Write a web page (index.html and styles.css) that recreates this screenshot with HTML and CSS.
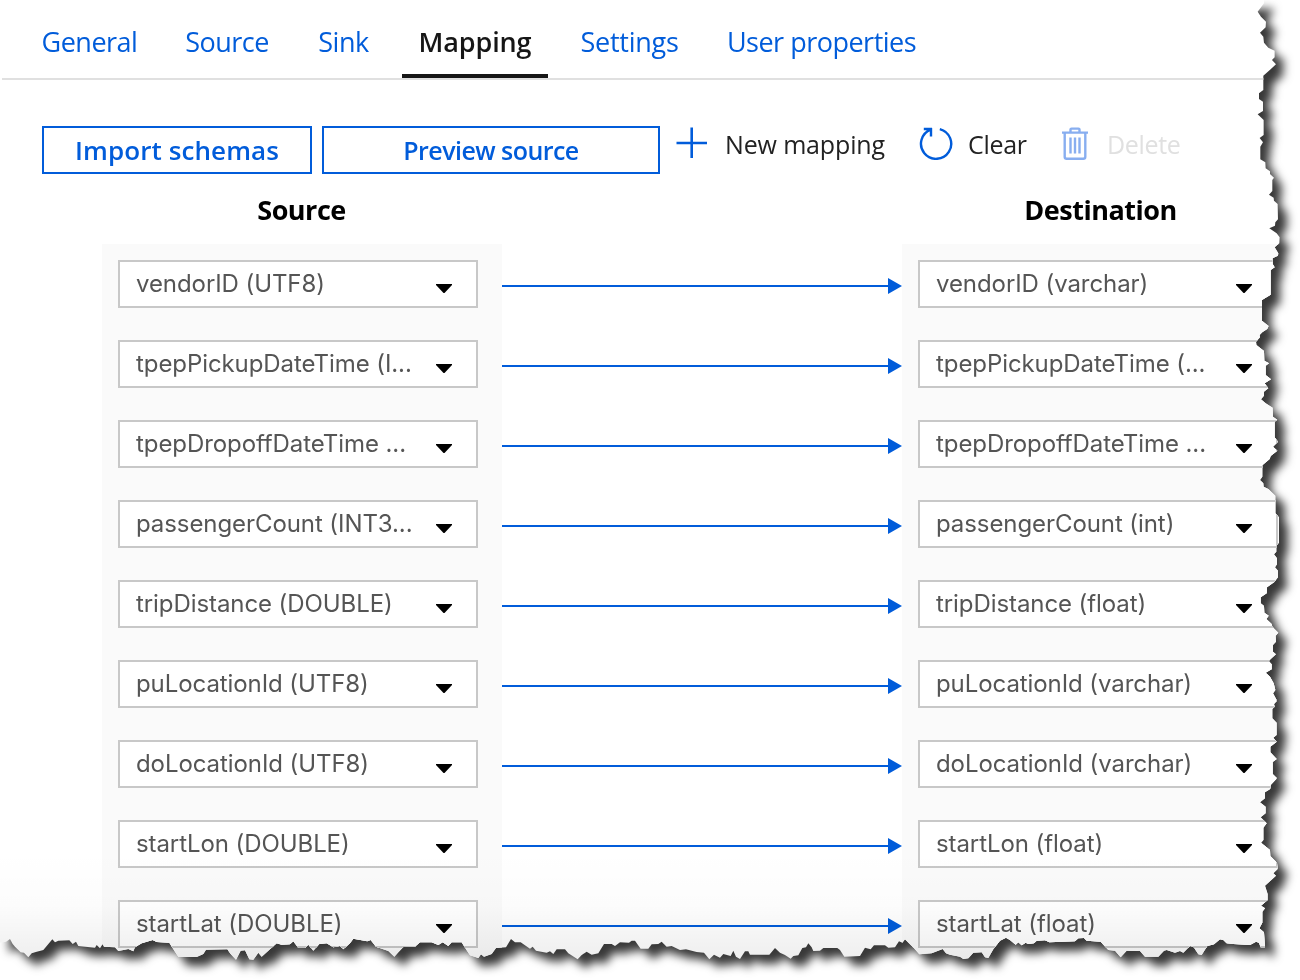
FILE: index.html
```html
<!DOCTYPE html>
<html lang="en">
<head>
<meta charset="utf-8">
<title>Mapping</title>
<link rel="stylesheet" href="styles.css">
</head>
<body>
<svg class="defs" width="0" height="0" aria-hidden="true">
  <defs>
    <clipPath id="torn-edge" clipPathUnits="userSpaceOnUse">
      <path transform="scale(.33333)" d="M0 0 H3792 V10
      L3773 35 3783 50 3798 65 3797 82 3780 98 3790 110 3792 128 3805 143 3824 152 3824 172 3816 180 3828 193 3812 208 3790 227 3790 270 3777 280 3777 297 3789 305 3789 333 3773 343 3791 360 3791 405 3779 414 3789 427 3781 440 3781 478 3796 487 3797 505 3810 514 3810 522 3822 533 3817 540 3817 573 3807 584 3821 593 3822 602 3833 612 3834 658 3826 667 3825 677 3808 685 3830 700 3839 712 3838 730 3824 742 3835 760 3834 767 3818 775 3818 792 3824 802 3812 810 3812 884 3786 900 3786 962 3806 978
      3802 987 3787 997 3779 1005 3780 1012 3768 1025 3769 1035 3792 1053 3793 1082 3807 1090 3797 1097 3797 1125 3813 1138 3794 1150 3805 1165 3792 1175 3792 1187 3783 1198 3797 1210 3818 1223 3819 1250 3832 1259 3824 1265 3824 1312 3834 1325 3819 1340 3832 1352 3812 1368 3809 1377 3787 1396 3787 1430 3780 1440 3790 1450 3791 1460 3805 1467 3826 1487 3826 1540 3837 1552 3837 1562 3837 1628 3829 1637 3829 1655 3822 1663 3831 1675 3831 1693 3825 1702 3834 1712 3834 1732 3823 1746 3801 1762 3800 1780 3782 1792 3782 1810 3792 1818 3793 1838 3806 1847 3799 1857 3815 1872 3817 1880 3835 1898 3827 1907 3828 1925
      3819 1935 3819 1955 3828 1963 3806 1983 3815 1993 3815 2008 3797 2018 3810 2030 3821 2050 3826 2070 3819 2080 3831 2102 3822 2112 3824 2120 3817 2127 3817 2155 3830 2168 3830 2205 3820 2213 3830 2225 3811 2240 3811 2257 3830 2277 3818 2286 3818 2322 3831 2335 3812 2355 3811 2367 3795 2377 3795 2395 3780 2407 3797 2420 3797 2440 3782 2452 3800 2470 3790 2483 3790 2520 3783 2528 3810 2550 3811 2568 3831 2588 3833 2607 3820 2620 3828 2627 3795 2657 3803 2682 3803 2700 3783 2717 3795 2725 3787 2735 3787 2768 3778 2785 3792 2797 3795 2842
      3782 2842 3777 2828 3768 2825 3750 2835 3700 2832 3680 2830 3670 2820 3660 2818 3642 2833 3622 2838 3605 2865 3595 2863 3580 2840 3570 2838 3550 2858 3540 2853 3525 2858 3500 2850 3492 2852 3475 2870 3435 2870 3420 2853 3380 2852 3362 2872 3345 2852 3325 2850 3302 2825 3260 2822 3252 2814 3235 2815 3225 2824 3148 2827 3135 2821 3110 2822 3102 2830 3085 2832 3077 2828 3065 2836 3055 2827 3047 2834 3030 2820 3018 2813 3000 2822 2980 2848 2965 2874 2955 2872 2945 2857 2920 2858 2905 2875 2890 2877 2880 2870 2850 2864 2838 2860 2828 2847 2795 2860 2758 2863 2745 2848 2715 2818 2707 2828 2697 2824 2685 2842 2665 2843 2655 2836 2622 2836 2612 2848
      2595 2843 2580 2868 2533 2870 2520 2850 2512 2844 2470 2844 2460 2852 2440 2853 2435 2842 2425 2830 2418 2842 2407 2844 2395 2866 2380 2868 2372 2876 2355 2865 2340 2858 2325 2844 2308 2864 2250 2864 2245 2854 2235 2854 2220 2877 2208 2870 2200 2852 2192 2868 2170 2862 2160 2873 2142 2864 2128 2878 2112 2858 2090 2856 2058 2848 2040 2850 2015 2838 2000 2840 1985 2825 1975 2832 1955 2833 1945 2846 1922 2846 1905 2822 1895 2822 1887 2828 1860 2827 1845 2838 1835 2832 1812 2832 1795 2860 1775 2864 1760 2855 1745 2865 1733 2878 1705 2860 1695 2848 1670 2848 1660 2862 1650 2854 1640 2858 1608 2852 1598 2840 1590 2846 1562 2827 1545 2827 1533 2817 1518 2842 1488 2844 1475 2862 1452 2870 1443 2863 1435 2874 1410 2866 1398 2848 1385 2827 1355 2827 1345 2838 1328 2827 1315 2835
      1295 2827 1260 2827 1245 2840 1210 2841 1195 2857 1183 2870 1165 2853 1128 2840 1112 2820 1102 2824 1060 2816 1050 2830 1030 2848 1020 2838 1000 2842 980 2830 958 2832 940 2852 925 2834 915 2844 895 2844 880 2824 870 2833 845 2834 830 2830 805 2852 785 2870 775 2858 760 2879 748 2878 735 2851 722 2852 708 2879 690 2860 682 2848 618 2849 610 2862 590 2871 535 2870 525 2855 508 2828 470 2826 458 2820 425 2830 405 2842 400 2854 385 2847 355 2853 345 2842 312 2840 308 2832 300 2845 290 2835 285 2843 235 2838 228 2825 218 2832 208 2821 175 2822 165 2827 157 2818 130 2850 110 2855 95 2860 85 2872 72 2858 62 2857 45 2840 38 2832 30 2817 18 2825 0 2828 Z"/>
    </clipPath>
  </defs>
</svg>
<div class="shadow">
  <main class="sheet">
    <nav class="tabs">
      <a class="tab t-general"><span>General</span></a>
      <a class="tab t-source"><span>Source</span></a>
      <a class="tab t-sink"><span>Sink</span></a>
      <a class="tab t-mapping active"><span>Mapping</span></a>
      <a class="tab t-settings"><span>Settings</span></a>
      <a class="tab t-user"><span>User properties</span></a>
    </nav>
    <div class="toolbar">
      <button class="btn import"><span>Import schemas</span></button>
      <button class="btn preview"><span>Preview source</span></button>
      <div class="cmd new">
        <svg width="32" height="34" viewBox="0 0 32 34" fill="none" stroke="#015cda" stroke-width="2.6"><path d="M15.700 1.500v30.500M.5 17h30.500"/></svg>
        <span>New mapping</span>
      </div>
      <div class="cmd clear">
        <svg width="34" height="34" viewBox="0 0 34 34" fill="none" stroke="#015cda" stroke-width="2.4"><path d="M20.800 3.100A15.100 15.100 0 1 1 11.800 3.600M4.800 3H13M12 2v8.500"/></svg>
        <span>Clear</span>
      </div>
      <div class="cmd delete">
        <svg width="28" height="34" viewBox="0 0 28 34" fill="none" stroke="#88aef0" stroke-width="2.4"><path d="M1 6.600h26M9.500 6.400V3.600q0-1 1-1h7q1 0 1 1V6.400M3.700 6.400v24.300q0 2 2 2h16.600q2 0 2-2V6.400M9.500 11.400v16M14 11.400v16M18.500 11.400v16"/></svg>
        <span>Delete</span>
      </div>
    </div>
    <div class="heads"><h2 class="h-source">Source</h2><h2 class="h-dest">Destination</h2></div>
    <div class="mapping">
      <section class="col">
        <div class="select"><span>vendorID (UTF8)</span><i></i></div>
        <div class="select"><span>tpepPickupDateTime (I...</span><i></i></div>
        <div class="select"><span>tpepDropoffDateTime ...</span><i></i></div>
        <div class="select"><span>passengerCount (INT3...</span><i></i></div>
        <div class="select"><span>tripDistance (DOUBLE)</span><i></i></div>
        <div class="select"><span>puLocationId (UTF8)</span><i></i></div>
        <div class="select"><span>doLocationId (UTF8)</span><i></i></div>
        <div class="select"><span>startLon (DOUBLE)</span><i></i></div>
        <div class="select"><span>startLat (DOUBLE)</span><i></i></div>
      </section>
      <div class="links">
        <div class="link"></div><div class="link"></div><div class="link"></div>
        <div class="link"></div><div class="link"></div><div class="link"></div>
        <div class="link"></div><div class="link"></div><div class="link"></div>
      </div>
      <section class="col">
        <div class="select"><span>vendorID (varchar)</span><i></i></div>
        <div class="select"><span>tpepPickupDateTime (...</span><i></i></div>
        <div class="select"><span>tpepDropoffDateTime ...</span><i></i></div>
        <div class="select"><span>passengerCount (int)</span><i></i></div>
        <div class="select"><span>tripDistance (float)</span><i></i></div>
        <div class="select"><span>puLocationId (varchar)</span><i></i></div>
        <div class="select"><span>doLocationId (varchar)</span><i></i></div>
        <div class="select"><span>startLon (float)</span><i></i></div>
        <div class="select"><span>startLat (float)</span><i></i></div>
      </section>
    </div>
    <div class="shade"></div>
  </main>
</div>
</body>
</html>
```
FILE: styles.css
```css
* { box-sizing: border-box; }
body { margin: 0; background: #fff; width: 1300px; height: 980px; overflow: hidden; font-family: "Open Sans", "Noto Sans", sans-serif; }
.defs { position: absolute; }
.shadow { width: 1300px; height: 980px; filter: drop-shadow(9px 9px 5px rgba(0, 0, 0, .78)); }
.sheet { position: relative; width: 1300px; height: 980px; overflow: hidden; background: #fff; clip-path: url(#torn-edge); }

.tabs { display: flex; gap: 16px; height: 80px; margin-left: 2px; padding-left: 24px; border-bottom: 2px solid #e0e0e0; }
.tab { display: flex; justify-content: center; height: 78px; padding-top: 23px; font-size: 27px; line-height: 37px; letter-spacing: -.5px; white-space: nowrap; color: #015cda; }
.t-general { width: 127px; }
.t-source { width: 116px; }
.t-sink { width: 85px; }
.t-mapping { width: 146px; }
.t-settings { width: 131px; letter-spacing: -.25px; }
.t-user { width: 221px; }
.tab.active { color: #161616; font-weight: 600; letter-spacing: -.15px; border-bottom: 4px solid #161616; }

.toolbar { display: flex; align-items: flex-start; height: 48px; margin: 46px 0 0 42px; }
.btn { height: 48px; padding: 0; border: 2px solid #015cda; background: #fff; color: #015cda; font: 600 26px/44px "Open Sans", sans-serif; white-space: nowrap; }
.import { width: 270px; margin-right: 10px; letter-spacing: .1px; }
.preview { width: 338px; font-size: 25px; letter-spacing: -.55px; }
.cmd { display: flex; height: 36px; font-size: 25px; line-height: 36px; letter-spacing: -.15px; white-space: nowrap; color: #222; }
.new { margin-left: 16px; width: 243px; gap: 17px; }
.clear { width: 142px; gap: 15px; letter-spacing: -.3px; }
.delete { gap: 18px; color: #e0e0e0; letter-spacing: -.35px; }

.heads { display: flex; height: 70px; padding: 18px 0 0 102px; }
h2 { margin: 0; width: 400px; font-size: 27px; font-weight: 700; line-height: 36px; letter-spacing: -.5px; text-align: center; color: #000; }
.h-dest { margin-left: 400px; }

.mapping { display: flex; padding-left: 102px; }
.col { display: flex; flex-direction: column; flex: none; gap: 32px; width: 400px; height: 736px; padding: 16px 24px 0 16px; background: #fafafa; }
.select { display: flex; flex: none; justify-content: space-between; height: 48px; padding: 0 24px 0 16px; border: 2px solid #c8c8c8; background: #fff; font: 24px/44px Inter, sans-serif; color: #555; white-space: nowrap; letter-spacing: -.08px; }
.select i { width: 16px; height: 9px; margin-top: 22px; background: #000; clip-path: polygon(0 0, 100% 0, 100% 12%, 53% 100%, 47% 100%, 0 12%); }
.links { flex: none; width: 400px; padding-top: 34px; }
.link { display: flex; align-items: center; height: 16px; margin-bottom: 64px; }
.link::before { content: ""; flex: 1; height: 2px; background: #015cda; }
.link::after { content: ""; border: solid transparent; border-width: 8px 0 8px 14px; border-left-color: #015cda; }
.shade { position: absolute; left: 0; right: 0; top: 850px; height: 110px; background: linear-gradient(transparent, rgba(0, 0, 0, .01) 50%, rgba(0, 0, 0, .065)); }
```
